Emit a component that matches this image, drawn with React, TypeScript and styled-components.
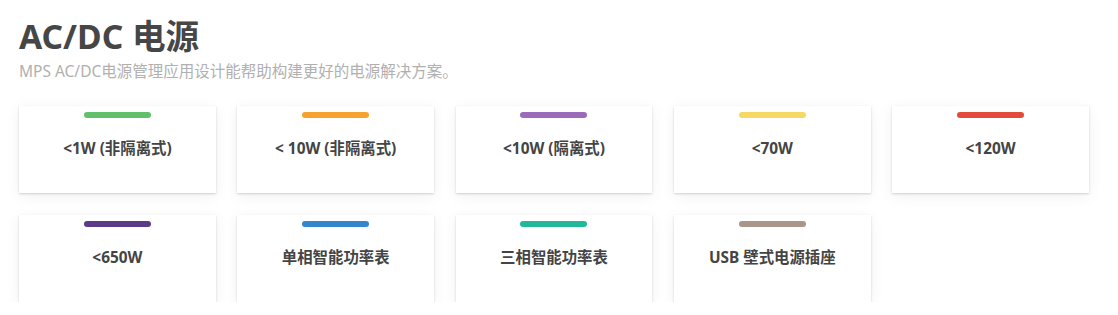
import React from 'react';
import styled, { createGlobalStyle } from 'styled-components';

const GlobalStyle = createGlobalStyle`
  * { box-sizing: border-box; }
  body {
    margin: 0;
    background: #ffffff;
    font-family: "Noto Sans", "Noto Sans CJK SC", sans-serif;
  }
`;

const Page = styled.div`
  padding: 14px 29px 0 19px;
`;

const Title = styled.h1`
  margin: 0;
  font-size: 33.6px;
  line-height: 44px;
  font-weight: 700;
  color: #464646;
`;

const Subtitle = styled.p`
  margin: 3px 0 0;
  font-size: 15.5px;
  line-height: 21px;
  color: #b0b0b0;
`;

const Grid = styled.div`
  margin-top: 24px;
  display: grid;
  grid-template-columns: repeat(5, 1fr);
  column-gap: 21.5px;
  row-gap: 22px;
`;

const Card = styled.div`
  height: 87px;
  background: #ffffff;
  box-shadow: 0 1px 2px rgba(0, 0, 0, 0.16), 0 3px 14px rgba(0, 0, 0, 0.06);
  display: flex;
  flex-direction: column;
  align-items: center;
  padding-top: 6px;
`;

const Bar = styled.div<{ $color: string }>`
  width: 67px;
  height: 6px;
  border-radius: 3px;
  background: ${({ $color }) => $color};
`;

const Label = styled.div`
  margin-top: 20px;
  font-size: 15.4px;
  line-height: 22px;
  font-weight: 700;
  color: #444444;
`;

const items = [
  { label: '<1W (非隔离式)', color: '#62bf6c' },
  { label: '< 10W (非隔离式)', color: '#f6a22e' },
  { label: '<10W (隔离式)', color: '#9b6ab9' },
  { label: '<70W', color: '#f5d964' },
  { label: '<120W', color: '#e24b3b' },
  { label: '<650W', color: '#5b3a87' },
  { label: '单相智能功率表', color: '#3385cc' },
  { label: '三相智能功率表', color: '#22b99b' },
  { label: 'USB 壁式电源插座', color: '#a99589' },
];

const App: React.FC = () => (
  <>
    <GlobalStyle />
    <Page>
      <Title>AC/DC 电源</Title>
      <Subtitle>MPS AC/DC电源管理应用设计能帮助构建更好的电源解决方案。</Subtitle>
      <Grid>
        {items.map((item) => (
          <Card key={item.label}>
            <Bar $color={item.color} />
            <Label>{item.label}</Label>
          </Card>
        ))}
      </Grid>
    </Page>
  </>
);

export default App;
